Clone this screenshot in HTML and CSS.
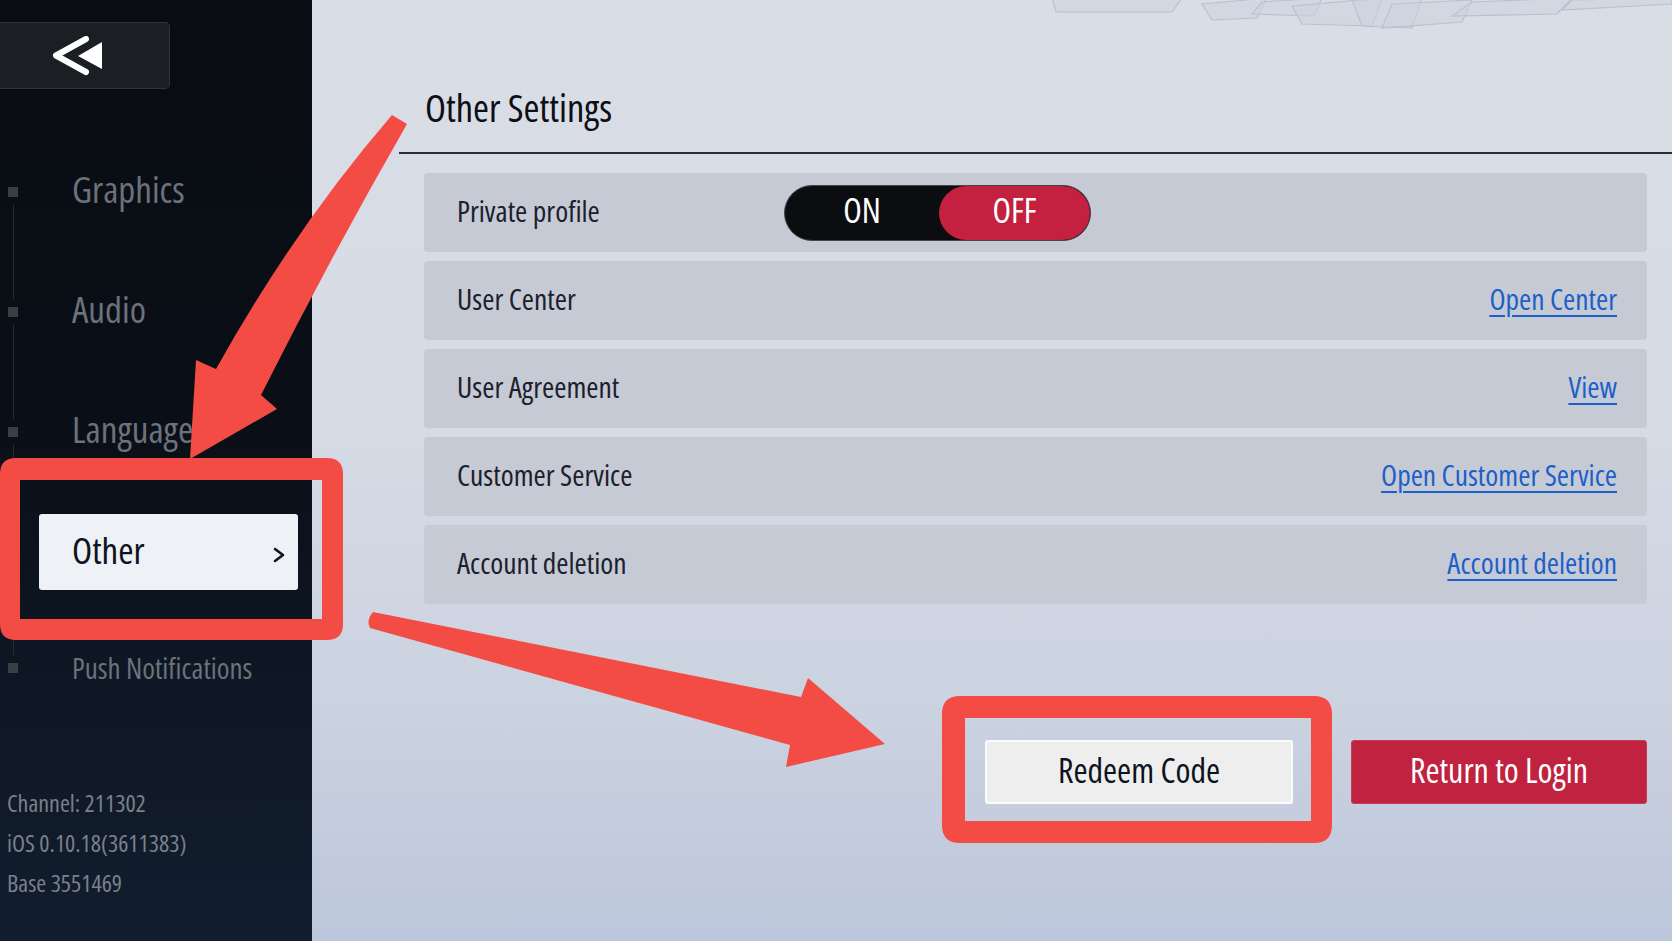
FILE: index.html
```html
<!DOCTYPE html>
<html lang="en">
<head>
<meta charset="utf-8">
<title>Other Settings</title>
<link rel="stylesheet" href="styles.css">
</head>
<body>
<div class="app">
  <aside class="sidebar">
    <button class="back" type="button" aria-label="Back">
      <svg class="back-icon" width="54" height="40" viewBox="0 0 54 40">
        <polyline points="34,3 4,19.5 34,36" fill="none" stroke="#fff" stroke-width="6" stroke-linecap="round" stroke-linejoin="round"/>
        <polygon points="26,20 50,6 50,33" fill="#fff"/>
      </svg>
    </button>
    <nav class="nav">
      <div class="nav-item first"><span class="rail"><i class="seg"></i><i class="dot"></i><i class="seg"></i></span><span class="label">Graphics</span></div>
      <div class="nav-item"><span class="rail"><i class="seg"></i><i class="dot"></i><i class="seg"></i></span><span class="label">Audio</span></div>
      <div class="nav-item"><span class="rail"><i class="seg"></i><i class="dot"></i><i class="seg"></i></span><span class="label">Language</span></div>
      <div class="nav-item active"><span class="rail"><i class="seg"></i><i class="dot"></i><i class="seg"></i></span><span class="label">Other<svg class="chev" width="12" height="16" viewBox="0 0 12 16"><polyline points="2,2 10,8 2,14" fill="none" stroke="#0e1420" stroke-width="2.6" stroke-linecap="round" stroke-linejoin="round"/></svg></span></div>
      <div class="nav-item last small"><span class="rail"><i class="seg"></i><i class="dot"></i><i class="seg"></i></span><span class="label">Push Notifications</span></div>
    </nav>
    <div class="info">
      <div>Channel: 211302</div>
      <div>iOS 0.10.18(3611383)</div>
      <div>Base 3551469</div>
    </div>
  </aside>

  <main class="content">
    <svg class="decor" width="620" height="34" viewBox="0 0 620 34">
      <g fill="#ccd3de" fill-opacity="0.55" stroke="#b9c1cf" stroke-width="1.2">
        <polygon points="0,-2 130,-2 120,12 4,12"/>
        <polygon points="150,4 215,-2 205,18 160,20"/>
        <polygon points="210,2 270,-2 262,16 200,14"/>
        <polygon points="240,6 330,-2 320,26 250,24"/>
        <polygon points="300,0 370,-2 360,28 310,26"/>
        <polygon points="340,4 420,0 410,22 330,28"/>
        <polygon points="420,2 520,-2 505,14 400,16"/>
        <polygon points="520,0 620,-2 620,4 510,10"/>
      </g>
    </svg>
    <h1 class="title">Other Settings</h1>
    <div class="rows">
      <div class="row">
        <span class="row-label fixed">Private profile</span>
        <div class="toggle">
          <span class="opt on">ON</span>
          <span class="opt off">OFF</span>
        </div>
      </div>
      <div class="row">
        <span class="row-label">User Center</span>
        <a class="link" href="#">Open Center</a>
      </div>
      <div class="row">
        <span class="row-label">User Agreement</span>
        <a class="link" href="#">View</a>
      </div>
      <div class="row">
        <span class="row-label">Customer Service</span>
        <a class="link" href="#">Open Customer Service</a>
      </div>
      <div class="row">
        <span class="row-label">Account deletion</span>
        <a class="link" href="#">Account deletion</a>
      </div>
    </div>
    <div class="actions">
      <button class="btn btn-light" type="button">Redeem Code</button>
      <button class="btn btn-red" type="button">Return to Login</button>
    </div>
  </main>
</div>

<svg class="annotations" width="1672" height="941" viewBox="0 0 1672 941" aria-hidden="true">
  <g fill="#f34c45">
    <path fill-rule="evenodd" d="M0,474 Q0,458 16,458 L327,458 Q343,458 343,474 L343,624 Q343,640 327,640 L16,640 Q0,640 0,624 Z M20,480 L20,619 L322,619 L322,480 Z"/>
    <path fill-rule="evenodd" d="M942,714 Q942,696 960,696 L1314,696 Q1332,696 1332,714 L1332,825 Q1332,843 1314,843 L960,843 Q942,843 942,825 Z M965,718 L965,821 L1311,821 L1311,718 Z"/>
    <path d="M392,115 L407,124 Q330,258 261,395 L277,409 L190,459 L196,360 L216,369 Q296,226 392,115 Z"/>
    <path d="M373,612 L801,697 L808,678 L885,744 L786,767 L790,745 L370,628 Q366,620 373,612 Z"/>
  </g>
</svg>
</body>
</html>
```

FILE: styles.css
```css
* {
  box-sizing: border-box;
}

html, body {
  margin: 0;
  padding: 0;
}

body {
  width: 1672px;
  height: 941px;
  overflow: hidden;
  position: relative;
  font-family: "Open Sans", "DejaVu Sans", sans-serif;
  font-stretch: 75%;
}

.app {
  display: flex;
  width: 1672px;
  height: 941px;
}

/* ---------- Sidebar ---------- */
.sidebar {
  width: 312px;
  flex: 0 0 312px;
  display: flex;
  flex-direction: column;
  background: linear-gradient(180deg, #090c12 0%, #0a0f17 45%, #0f1928 80%, #121d2d 100%);
  color: #6c717a;
}

.back {
  margin-top: 22px;
  width: 170px;
  height: 67px;
  padding: 0 0 0 52px;
  display: flex;
  align-items: center;
  background: #1b1e23;
  border: 1px solid #30343a;
  border-left: none;
  border-radius: 0 5px 5px 0;
}

.back-icon {
  display: block;
}

.nav {
  margin-top: 43px;
  display: flex;
  flex-direction: column;
}

.nav-item {
  height: 120px;
  display: flex;
  align-items: stretch;
  padding-left: 8px;
  font-size: 37px;
  white-space: nowrap;
}

.nav-item.last {
  height: 112px;
}

.rail {
  width: 10px;
  flex: 0 0 10px;
  display: flex;
  flex-direction: column;
  align-items: center;
}

.seg {
  display: block;
  width: 1px;
  flex: 1;
  background: #272b32;
}

.seg:first-child {
  margin-bottom: 8px;
}

.seg:last-child {
  margin-top: 8px;
}

.first .seg:first-child,
.last .seg:last-child {
  visibility: hidden;
}

.dot {
  display: block;
  width: 10px;
  height: 10px;
  flex: 0 0 10px;
  background: #3a3e45;
}

.label {
  align-self: center;
  margin: 0 0 6px 21px;
  padding-left: 33px;
  line-height: 44px;
  color: #6c717a;
}

.small .label {
  font-size: 29px;
  margin-bottom: 0;
}

.active .label {
  width: 259px;
  height: 76px;
  margin-bottom: 0;
  display: flex;
  align-items: center;
  justify-content: space-between;
  padding-right: 13px;
  padding-bottom: 5px;
  background: #eef1f6;
  border-radius: 3px;
  color: #0e1420;
}

.chev {
  display: block;
  margin-top: 10px;
}

.info {
  margin-top: 59px;
  padding-left: 7px;
  font-size: 24px;
  line-height: 40px;
  color: #7a8089;
}

/* ---------- Main ---------- */
.content {
  flex: 1;
  position: relative;
  padding-left: 87px;
  background: linear-gradient(180deg, #d9dde6 0%, #d6dbe5 45%, #cbd2e0 75%, #bdc7db 100%);
}

.decor {
  position: absolute;
  top: 0;
  right: 0;
  display: block;
}

.title {
  margin: 0;
  padding: 85px 0 23px 26px;
  font-size: 38.5px;
  line-height: 44px;
  font-weight: 400;
  color: #0d0f14;
  border-bottom: 2px solid #2a2e36;
}

.rows {
  margin: 19px 25px 0 25px;
  display: flex;
  flex-direction: column;
  gap: 9px;
}

.row {
  height: 79px;
  display: flex;
  align-items: center;
  padding: 0 30px 0 33px;
  background: #c6cad5;
  border-radius: 4px;
  font-size: 29.5px;
}

.row-label {
  color: #1b202c;
  margin-bottom: 5px;
}

.row-label.fixed {
  flex: 0 0 327px;
}

.toggle {
  width: 307px;
  height: 56px;
  display: flex;
  background: #0c0d10;
  border: 1.5px solid #45464a;
  border-radius: 28px;
  overflow: hidden;
}

.opt {
  display: flex;
  align-items: center;
  justify-content: center;
  padding-bottom: 5px;
  color: #fff;
  font-size: 34px;
}

.opt.on {
  flex: 0 0 154px;
}

.opt.off {
  flex: 1;
  background: #c4203f;
  border-radius: 28px;
}

.link {
  margin-left: auto;
  margin-bottom: 5px;
  color: #1d5fc9;
  text-decoration: underline;
  text-decoration-thickness: 1.5px;
  text-underline-offset: 5px;
}

.actions {
  margin: 136px 25px 0 0;
  display: flex;
  justify-content: flex-end;
  gap: 58px;
}

.btn {
  height: 64px;
  font-family: inherit;
  font-stretch: inherit;
  font-size: 34px;
  border-radius: 3px;
  padding: 0 0 4px 0;
}

.btn-light {
  width: 308px;
  background: #eeeeee;
  border: 2px solid #fbfbfd;
  color: #0d1320;
}

.btn-red {
  width: 296px;
  background: #c0223f;
  border: 1px solid #c83a55;
  color: #fff;
}

/* ---------- Annotation overlay ---------- */
.annotations {
  position: absolute;
  top: 0;
  left: 0;
  pointer-events: none;
}
```
